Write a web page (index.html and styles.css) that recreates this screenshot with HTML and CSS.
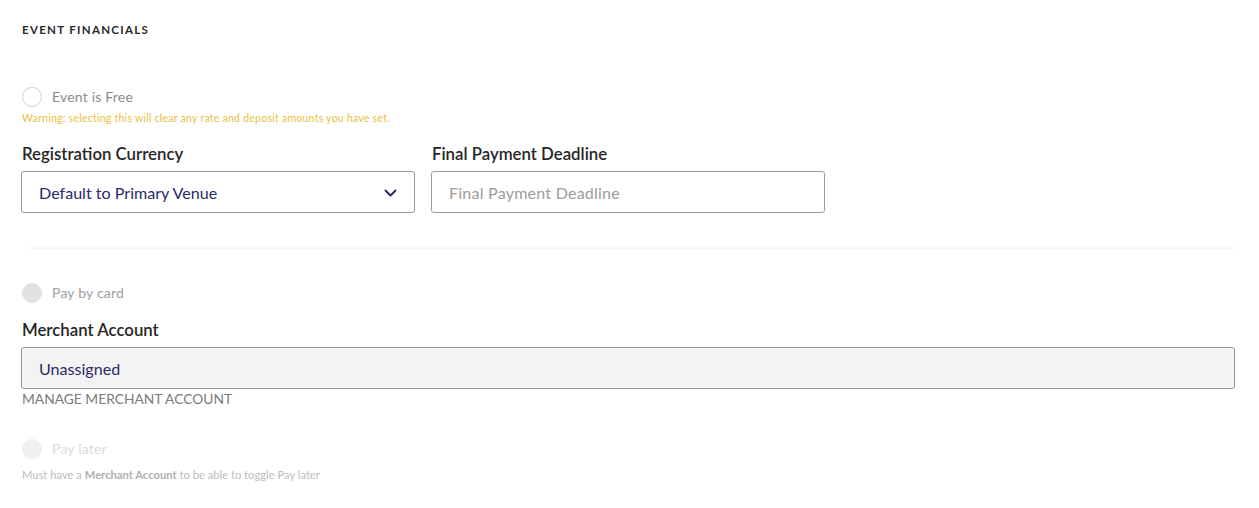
FILE: index.html
```html
<!DOCTYPE html>
<html>
<head>
<meta charset="utf-8">
<link rel="stylesheet" href="styles.css">
</head>
<body>
<div class="page">
  <h2 class="section-title">EVENT FINANCIALS</h2>

  <div class="radio-row free">
    <span class="radio"></span>
    <span class="radio-label">Event is Free</span>
  </div>
  <div class="warning">Warning: selecting this will clear any rate and deposit amounts you have set.</div>

  <div class="field-row">
    <div class="field">
      <label class="field-label">Registration Currency</label>
      <div class="input select">
        <span class="value">Default to Primary Venue</span>
        <svg class="chevron" width="13" height="8" viewBox="0 0 13 8"><polyline points="1.5,1.5 6.5,6.5 11.5,1.5" fill="none" stroke="#2b2a6b" stroke-width="2" stroke-linecap="round" stroke-linejoin="round"/></svg>
      </div>
    </div>
    <div class="field">
      <label class="field-label">Final Payment Deadline</label>
      <div class="input">
        <span class="placeholder">Final Payment Deadline</span>
      </div>
    </div>
  </div>

  <div class="separator"></div>

  <div class="radio-row card">
    <span class="radio filled"></span>
    <span class="radio-label">Pay by card</span>
  </div>

  <label class="field-label merchant-label">Merchant Account</label>
  <div class="input disabled">
    <span class="value">Unassigned</span>
  </div>
  <div class="manage">MANAGE MERCHANT ACCOUNT</div>

  <div class="radio-row later">
    <span class="radio faint"></span>
    <span class="radio-label">Pay later</span>
  </div>
  <div class="hint">Must have a <b>Merchant Account</b> to be able to toggle Pay later</div>
</div>
</body>
</html>
```

FILE: styles.css
```css
* { box-sizing: border-box; }
html, body { margin: 0; padding: 0; background: #fff; }
body { font-family: Lato, "Open Sans", sans-serif; color: #222; }

.page { padding: 22px 24px 0 21px; width: 1259px; }

.section-title {
  margin: 0 0 0 1px;
  font-size: 11.5px;
  line-height: 16px;
  font-weight: 700;
  letter-spacing: 1.3px;
  color: #2a2a2a;
}

.radio-row { display: flex; align-items: center; height: 20px; margin-left: 1px; }
.radio-row.free { margin-top: 49px; }
.radio {
  width: 20px; height: 20px; border-radius: 50%;
  border: 1px solid #cfcfcf; background: #fff; flex: none;
}
.radio.filled { background: #e2e2e2; border-color: #e2e2e2; }
.radio.faint { background: #f0f0f0; border-color: #f0f0f0; }
.radio-label { margin-left: 10px; margin-top: -2px; font-size: 14px; letter-spacing: 0.2px; color: #8a8a8a; }
.later .radio-label { color: #dcdcdc; }
.card .radio-label { color: #a0a0a0; }

.warning {
  margin: 5px 0 0 1px;
  font-size: 10.5px; line-height: 12px;
  letter-spacing: 0.25px;
  color: #e9c03c;
}

.field-row { display: flex; gap: 16px; margin-top: 20px; }
.field { width: 394px; }
.field-label {
  display: block;
  margin-left: 1px;
  font-size: 16.8px; line-height: 20px; font-weight: 600;
  color: #262626;
}
.input {
  margin-top: 7px;
  height: 42px;
  border: 1px solid #9a9a9a;
  border-radius: 3px;
  display: flex; align-items: center;
  padding: 0 17px;
  font-size: 16.1px;
}
.select { justify-content: space-between; }
.value { color: #2b2a6b; }
.placeholder { color: #9c9c9c; letter-spacing: 0.2px; }
.chevron { margin-right: 0; margin-top: 1px; }

.separator {
  margin: 33px 1px 0 9px;
  height: 3px;
  background: #f8f8f8;
}

.radio-row.card { margin-top: 34px; }
.merchant-label { margin-top: 17px; }
.input.disabled { background: #f3f3f3; width: 1214px; }

.manage {
  margin: 2px 0 0 1px;
  font-size: 13.8px; line-height: 16px;
  color: #7a7a7a;
}

.radio-row.later { margin-top: 32px; }
.hint {
  margin: 9px 0 0 1px;
  font-size: 11.2px; line-height: 13px;
  color: #bcbcbc;
}
.hint b { font-weight: 700; color: #b0b0b0; }
```
